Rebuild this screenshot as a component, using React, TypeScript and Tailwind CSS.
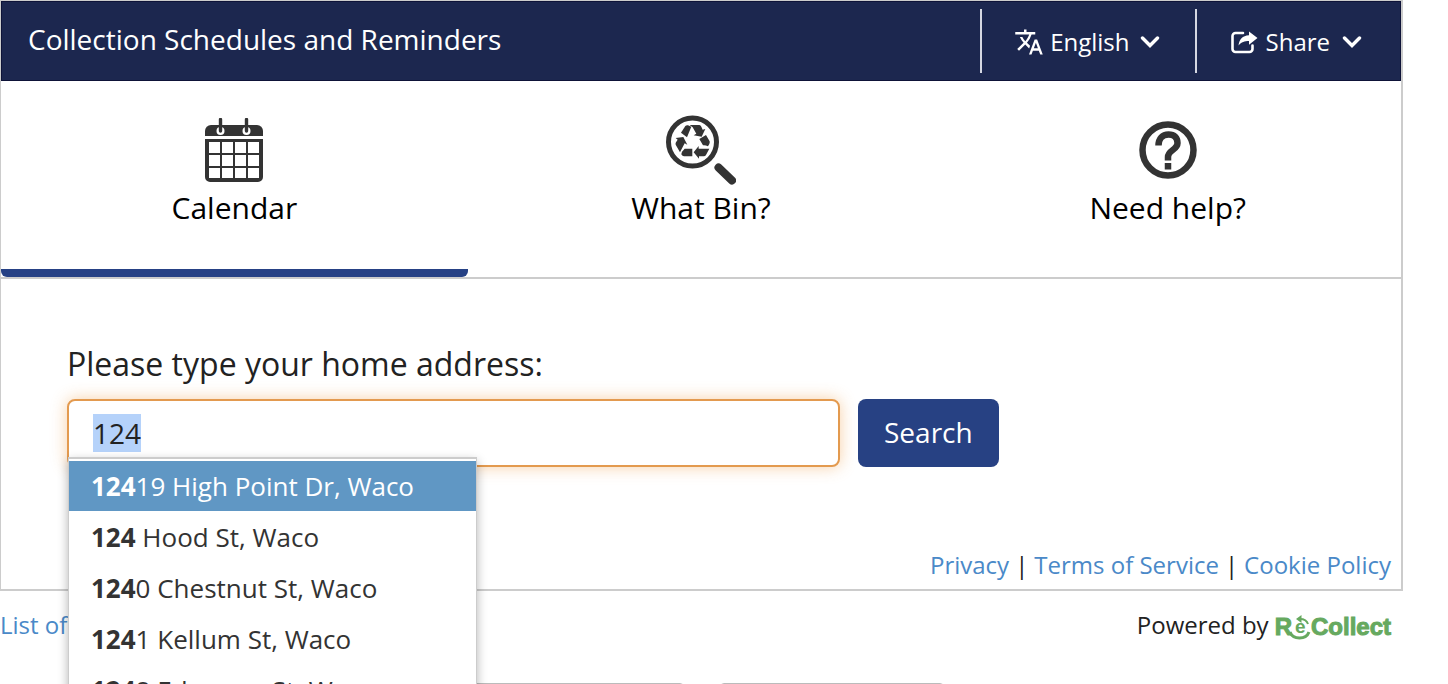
import { useEffect, useRef } from 'react';
import type { ReactNode } from 'react';
import { MdTranslate } from 'react-icons/md';

const QUERY = '124';

const SUGGESTIONS = [
  '12419 High Point Dr, Waco',
  '124 Hood St, Waco',
  '1240 Chestnut St, Waco',
  '1241 Kellum St, Waco',
  '1248 Edmorse St, Waco',
];

function Chevron() {
  return (
    <svg className="h-3 w-5" viewBox="0 0 20 12" fill="none" stroke="currentColor" aria-hidden="true">
      <path d="M2.5 2 10 9.5 17.5 2" strokeWidth={3.4} strokeLinecap="round" />
    </svg>
  );
}

function ShareIcon() {
  return (
    <svg className="h-6 w-[27px]" viewBox="0 0 27 24" aria-hidden="true">
      <path
        d="M12 3H4.500A3 3 0 0 0 1.500 6v13a3 3 0 0 0 3 3h14a3 3 0 0 0 3-3v-3.500"
        fill="none"
        stroke="currentColor"
        strokeWidth={2.6}
        strokeLinecap="round"
      />
      <path
        d="M18 1.500 26.500 8 18 14.800v-3.800C13.500 11 10.500 12 7.500 15.500 8 9.500 11.500 5.500 18 5.200z"
        fill="currentColor"
      />
    </svg>
  );
}

function CalendarIcon() {
  return (
    <svg className="h-16 w-[58px]" viewBox="0 0 58 64" aria-hidden="true">
      <path d="M0 18V13a6 6 0 0 1 6-6h46a6 6 0 0 1 6 6v5z" fill="#333" />
      <g fill="#fff">
        <circle cx="15.500" cy="13" r="4" />
        <circle cx="41.500" cy="13" r="4" />
      </g>
      <path d="M15.500 1.500V13M41.500 1.500V13" stroke="#333" strokeWidth={3.4} strokeLinecap="round" />
      <path
        d="M0 21h58v38a5 5 0 0 1-5 5H5a5 5 0 0 1-5-5z
          M4 24v11h11V24z M17 24v11h11V24z M30 24v11h11V24z M43 24v11h11V24z
          M4 37v11h11V37z M17 37v11h11V37z M30 37v11h11V37z M43 37v11h11V37z
          M4 50v10h11V50z M17 50v10h11V50z M30 50v10h11V50z M43 50v10h11V50z"
        fill="#333"
        fillRule="evenodd"
      />
    </svg>
  );
}

function WhatBinIcon() {
  return (
    <svg className="h-[70px] w-[70px]" viewBox="0 0 70 70" aria-hidden="true">
      <circle cx="26.500" cy="27" r="24" fill="none" stroke="#333" strokeWidth={5} />
      <path d="M52.500 52.500 66 65.500" stroke="#333" strokeWidth={8} strokeLinecap="round" />
      <g transform="translate(-46 -15) scale(.3333)" fill="#333">
        <path d="M183 98 196 78Q199 75 204 76L214 80 201 112z" />
        <path d="M209 75H238Q242 76 244 80L248 89 256 87 245 110 221 106 229 101 218 82z" />
        <path d="M238 117 258 105 269 124Q270 128 268 132L264 139Q256 135 249 136z" />
        <path d="M221 157 236 138V146H268L258 165Q256 169 251 169H237V176z" />
        <path d="M167 114 190 111 202 134 194 130 180 157 167 134Q166 130 168 127L173 119z" />
        <path d="M194 146H217V169H192Q187 169 184 163L186 155z" />
      </g>
    </svg>
  );
}

function HelpIcon() {
  return (
    <svg className="h-[58px] w-[58px]" viewBox="0 0 58 58" fill="none" stroke="#333" aria-hidden="true">
      <circle cx="29" cy="29" r="25.500" strokeWidth={6.5} />
      <path d="M19.500 24.500c0-7 4-11 10-11S38.500 17 38.500 22c0 7-9.500 7-9.500 14v3.500" strokeWidth={6.5} />
      <path d="M29 42v6.500" strokeWidth={6.5} />
    </svg>
  );
}

function RecollectLogo() {
  return (
    <span className="flex items-center pt-1 font-['Liberation_Sans',sans-serif] text-2xl font-bold text-[#66a95f] [-webkit-text-stroke:1px_#66a95f]">
      R
      <svg className="h-6 w-[19px] overflow-visible" viewBox="0 0 19 24" aria-hidden="true">
        <text x="3" y="18" fontSize="19" fill="#66a95f">e</text>
        <path d="M-2 17C1 25 14 25 17 17" fill="none" stroke="#66a95f" strokeWidth={3} />
        <path d="M16 9C15 6 12 4 8 4" fill="none" stroke="#66a95f" strokeWidth={2} />
        <path d="M4 4 9.500 0v8z" fill="#66a95f" />
      </svg>
      Collect
    </span>
  );
}

function Tab({ label, active, children }: { label: string; active?: boolean; children: ReactNode }) {
  return (
    <button role="tab" aria-selected={!!active} className="flex flex-1 flex-col items-center">
      <span className="flex h-[111px] items-center justify-center pt-[26px]">{children}</span>
      <span className="h-[77px] text-3xl leading-8 text-black">{label}</span>
      <span className={active ? 'h-2 w-full rounded-b-md bg-[#264185]' : 'h-2 w-full'} />
    </button>
  );
}

function Suggestion({ text, selected }: { text: string; selected: boolean }) {
  return (
    <li
      role="option"
      aria-selected={selected}
      className={`flex h-[50px] items-center whitespace-pre px-[22px] ${
        selected ? 'bg-[#6097c4] text-white' : 'text-[#333]'
      }`}
    >
      <b>{text.slice(0, QUERY.length)}</b>
      {text.slice(QUERY.length)}
    </li>
  );
}

export default function App() {
  const inputRef = useRef<HTMLInputElement>(null);

  // Start with the typed text highlighted
  useEffect(() => {
    inputRef.current?.focus();
    inputRef.current?.select();
  }, []);

  return (
    <div className="h-screen overflow-hidden bg-white pr-[45px] font-['Open_Sans',sans-serif] text-2xl text-[#222]">
      <main className="border-y border-r-2 border-l border-[#ccc] border-b-2">
        <header className="flex h-20 items-center justify-between border border-[#0e1338] bg-[#1c274f] pl-[26px] text-white">
          <h1 className="pb-0.5 text-[28px]">Collection Schedules and Reminders</h1>
          <div className="flex">
            <button className="flex h-16 items-center border-l-2 border-[#d5d8e2] pt-0.5 pr-[35px] pl-8">
              <MdTranslate size={30} aria-hidden="true" />
              <span className="mr-2.5 ml-1.5">English</span>
              <Chevron />
            </button>
            <button className="flex h-16 items-center border-l-2 border-[#d5d8e2] pt-0.5 pr-[38px] pl-[34px]">
              <ShareIcon />
              <span className="mr-3 ml-2">Share</span>
              <Chevron />
            </button>
          </div>
        </header>

        <div role="tablist" className="flex border-b-2 border-[#ccc]">
          <Tab label="Calendar" active>
            <CalendarIcon />
          </Tab>
          <Tab label="What Bin?">
            <WhatBinIcon />
          </Tab>
          <Tab label="Need help?">
            <HelpIcon />
          </Tab>
        </div>

        <form className="px-[66px] pt-16" onSubmit={(e) => e.preventDefault()}>
          <label htmlFor="address" className="block text-[32px] leading-[42px]">
            Please type your home address:
          </label>
          <div className="mt-3.5 flex gap-[18px]">
            <div className="relative max-w-[773px] flex-1">
              <input
                id="address"
                ref={inputRef}
                defaultValue={QUERY}
                autoComplete="off"
                className="h-[68px] w-full rounded-lg border-2 border-[#e39a4f] bg-white px-6 text-[28px] shadow-[0_0_16px_rgba(237,150,60,0.45)] outline-none selection:bg-[#b5d2fa] selection:text-[#222]"
              />
              <ul
                role="listbox"
                aria-label="Matching addresses"
                className="absolute top-[58px] left-px z-10 flex w-[409px] flex-col gap-px border border-t-2 border-[#ccc] bg-white pt-0.5 text-[26px] shadow-[0_4px_10px_rgba(0,0,0,0.3)]"
              >
                {SUGGESTIONS.map((text, i) => (
                  <Suggestion key={text} text={text} selected={i === 0} />
                ))}
              </ul>
            </div>
            <button className="h-[68px] rounded-lg bg-[#274183] px-[26px] text-[28px] text-white">Search</button>
          </div>
        </form>

        <nav className="mt-20 flex justify-end gap-1.5 pr-2.5 pb-1.5 leading-9">
          <a href="#privacy" className="text-[#4a89c8]">Privacy</a>
          <span>|</span>
          <a href="#terms" className="text-[#4a89c8]">Terms of Service</a>
          <span>|</span>
          <a href="#cookies" className="text-[#4a89c8]">Cookie Policy</a>
        </nav>
      </main>

      <footer className="mt-4 flex h-9 justify-between pr-3 leading-9">
        <a href="#list" className="text-[#4a89c8]">List of</a>
        <p className="flex items-center gap-1.5">
          Powered by
          <RecollectLogo />
        </p>
      </footer>

      <div className="mt-10 flex gap-9 pl-[400px]">
        <div className="h-20 w-[284px] rounded-sm border border-[#bbb]" />
        <div className="h-20 w-[224px] rounded-sm border border-[#bbb]" />
      </div>
    </div>
  );
}
